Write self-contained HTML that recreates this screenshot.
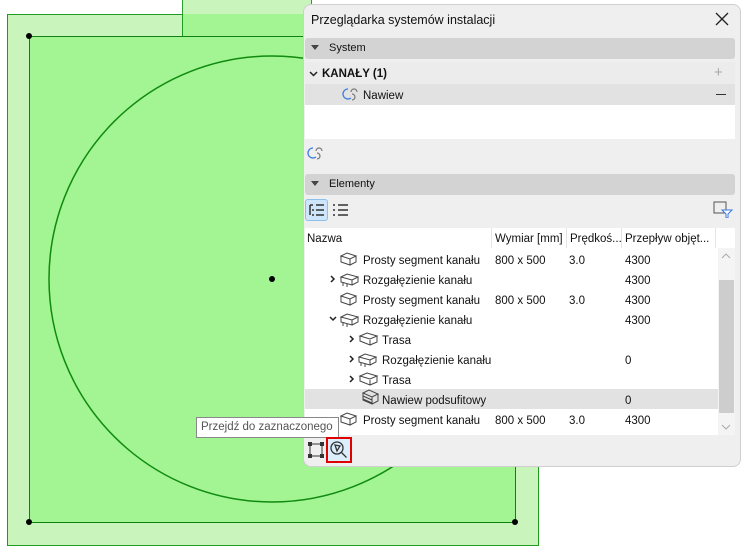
<!DOCTYPE html>
<html><head><meta charset="utf-8"><style>
*{margin:0;padding:0;box-sizing:border-box}
body{width:741px;height:549px;overflow:hidden;background:#fff;position:relative;font-family:"Liberation Sans",sans-serif;font-size:11.5px;color:#111}
.a{position:absolute}
.t{position:absolute;white-space:nowrap;line-height:20px}
.hdr{position:absolute;left:305px;width:430px;height:21px;background:#d3d3d3;border-radius:3px}
.row{position:absolute;left:305px;width:413px;height:20px}
.ic{position:absolute}
.tb .t{margin-top:2px}
</style></head><body>
<!-- canvas -->
<div class="a" style="left:182px;top:-2px;width:130px;height:38px;background:#c9f4bb;border:1px solid #2aa12a"></div>
<div class="a" style="left:7px;top:14px;width:532px;height:532px;background:#c9f4bb;border:1.5px solid #1e9a1e"></div>
<div class="a" style="left:182px;top:14px;width:130px;height:22px;background:#a2f592;border-left:1.5px solid #1e9a1e"></div>
<div class="a" style="left:29px;top:36px;width:487px;height:487px;background:#a2f592;border:1.5px solid #108010"></div>
<svg class="a" style="left:0;top:0" width="741" height="549">
<circle cx="272" cy="279" r="223" fill="none" stroke="#108a10" stroke-width="1.5"/>
<circle cx="29" cy="36" r="3" fill="#000"/><circle cx="29" cy="522" r="3" fill="#000"/><circle cx="515" cy="522" r="3" fill="#000"/><circle cx="272" cy="279" r="3" fill="#000"/>
</svg>
<!-- panel -->
<div class="a" style="left:303px;top:4px;width:438px;height:463px;background:#efefef;border:1px solid #cfcfcf;border-radius:8px"></div>
<div class="t" style="left:311px;top:10px;font-size:12.5px">Przeglądarka systemów instalacji</div>
<svg class="a" style="left:715px;top:12px" width="14" height="14"><path d="M1 1L13 13M13 1L1 13" stroke="#222" stroke-width="1.3"/></svg>
<div class="hdr" style="top:38px"></div>
<svg class="a" style="left:311px;top:45px" width="9" height="6"><path d="M0 0H8L4 5Z" fill="#444"/></svg>
<div class="t" style="left:329px;top:38px;font-size:11px">System</div>
<div class="a" style="left:305px;top:62px;width:430px;height:43px;background:#ececec"></div>
<svg class="a" style="left:309px;top:71px" width="9" height="6"><path d="M1 1L4.5 4.5L8 1" stroke="#222" stroke-width="1.5" fill="none"/></svg>
<div class="t" style="left:322px;top:64px;font-weight:bold;font-size:11.5px">KANAŁY (1)</div>
<div class="t" style="left:714px;top:63px;color:#aaa;font-size:15px">+</div>
<div class="a" style="left:305px;top:84px;width:430px;height:21px;background:#e2e2e2"></div>
<svg class="ic" style="left:342px;top:86px" width="18" height="16"><path d="M6 3a5 5 0 1 0 3 9" stroke="#3a7ae0" stroke-width="1.3" fill="none"/><path d="M9 6a3 3 0 0 1 6 0M10 8a3 3 0 1 1 0 6" stroke="#777" stroke-width="1.2" fill="none"/></svg>
<div class="t" style="left:363px;top:86px">Nawiew</div>
<div class="a" style="left:716px;top:94px;width:10px;height:1px;background:#333"></div>
<div class="a" style="left:305px;top:105px;width:430px;height:34px;background:#fff"></div>
<svg class="ic" style="left:307px;top:145px" width="18" height="17"><path d="M6 3a5 5 0 1 0 3 9" stroke="#3a7ae0" stroke-width="1.3" fill="none"/><path d="M9 6a3 3 0 0 1 6 0M10 8a3 3 0 1 1 0 6" stroke="#777" stroke-width="1.2" fill="none"/></svg>
<div class="hdr" style="top:174px"></div>
<svg class="a" style="left:311px;top:181px" width="9" height="6"><path d="M0 0H8L4 5Z" fill="#444"/></svg>
<div class="t" style="left:329px;top:174px;font-size:11px">Elementy</div>
<div class="a" style="left:305px;top:199px;width:23px;height:22px;background:#cde6fb;border:1px solid #8cc1ee;border-radius:3px"></div>
<svg class="a" style="left:309px;top:204px" width="40" height="13"><path d="M1 1h3M1 1v10M3 6h2M3 11h2M7 1h8M7 6h8M7 11h8" stroke="#333" stroke-width="1.5" fill="none"/><path d="M24 1h2M24 6h2M24 11h2M29 1h10M29 6h10M29 11h10" stroke="#333" stroke-width="1.6"/></svg>
<svg class="a" style="left:713px;top:201px" width="20" height="17"><rect x="1" y="1" width="12" height="11" stroke="#555" fill="none"/><path d="M9 9h10l-4 4v4h-2v-4z" fill="#fff" stroke="#3a7ae0"/></svg>
<!-- table -->
<div class="a" style="left:305px;top:228px;width:430px;height:207px;background:#fff"></div>
<div class="a" style="left:491px;top:228px;width:1px;height:20px;background:#e4e4e4"></div>
<div class="a" style="left:566px;top:228px;width:1px;height:20px;background:#e4e4e4"></div>
<div class="a" style="left:621px;top:228px;width:1px;height:20px;background:#e4e4e4"></div>
<div class="a" style="left:715px;top:228px;width:1px;height:20px;background:#e4e4e4"></div>
<div class="tb">
<div class="t" style="left:307px;top:227px">Nazwa</div>
<div class="t" style="left:495px;top:227px">Wymiar [mm]</div>
<div class="t" style="left:570px;top:227px">Prędkoś...</div>
<div class="t" style="left:625px;top:227px">Przepływ objęt...</div>
</div>
<div class="a" style="left:718px;top:248px;width:17px;height:187px;background:#f4f4f4"></div>
<div class="a" style="left:719px;top:280px;width:15px;height:133px;background:#cdcdcd"></div>
<svg class="a" style="left:721px;top:252px" width="10" height="180"><path d="M1 6L5 2L9 6" stroke="#aaa" fill="none"/><path d="M1 173L5 177L9 173" stroke="#aaa" fill="none"/></svg>
<div class="row" style="top:389px;background:#e2e2e2"></div>
<svg class="a" style="left:305px;top:250px" width="190" height="180" fill="none" stroke="#444" stroke-width="1">
<g id="p"><path d="M36 6l6-3 9 3-6 3z M36 6v6l9 3v-6 M45 15l6-3V6"/></g>
<use href="#p" y="40"/><use href="#p" y="160"/>
<g id="r"><path d="M36 27l6-3 11 3-6 3z M36 27v5l11 3v-5 M47 35l6-3v-5 M38 33v3 M42 34v3"/></g>
<use href="#r" y="40"/><use href="#r" x="18" y="80"/>
<path d="M26 26l3 3-3 3M25 67l3 3 3-3M45 86l3 3-3 3M45 106l3 3-3 3M45 126l3 3-3 3" stroke="#222" stroke-width="1.5"/>
<g id="tr"><path d="M55 86l7-3 10 3-7 3z M55 86v5l10 4v-5 M65 95l7-3v-6"/></g>
<use href="#tr" y="40"/>
<path d="M58 143l6-3 9 4-6 3z M58 143v7l9 4v-7 M67 154l6-3v-7 M58 146l9 4 M58 149l9 4"/>
</svg>
<div class="tb">
<div class="t" style="left:363px;top:249px">Prosty segment kanału</div>
<div class="t" style="left:363px;top:269px">Rozgałęzienie kanału</div>
<div class="t" style="left:363px;top:289px">Prosty segment kanału</div>
<div class="t" style="left:363px;top:309px">Rozgałęzienie kanału</div>
<div class="t" style="left:382px;top:329px">Trasa</div>
<div class="t" style="left:382px;top:349px">Rozgałęzienie kanału</div>
<div class="t" style="left:382px;top:369px">Trasa</div>
<div class="t" style="left:382px;top:389px">Nawiew podsufitowy</div>
<div class="t" style="left:363px;top:409px">Prosty segment kanału</div>
<div class="t" style="left:495px;top:249px">800 x 500</div><div class="t" style="left:569px;top:249px">3.0</div><div class="t" style="left:625px;top:249px">4300</div>
<div class="t" style="left:625px;top:269px">4300</div>
<div class="t" style="left:495px;top:289px">800 x 500</div><div class="t" style="left:569px;top:289px">3.0</div><div class="t" style="left:625px;top:289px">4300</div>
<div class="t" style="left:625px;top:309px">4300</div>
<div class="t" style="left:625px;top:349px">0</div>
<div class="t" style="left:625px;top:389px">0</div>
<div class="t" style="left:495px;top:409px">800 x 500</div><div class="t" style="left:569px;top:409px">3.0</div><div class="t" style="left:625px;top:409px">4300</div>
</div>
<!-- tooltip -->
<div class="a" style="left:196px;top:417px;width:143px;height:21px;background:#fff;border:1px solid #888"></div>
<div class="t" style="left:201px;top:417px;color:#555">Przejdź do zaznaczonego</div>
<!-- bottom icons -->
<svg class="a" style="left:307px;top:441px" width="18" height="18"><rect x="3" y="3" width="12" height="12" fill="none" stroke="#333"/><g fill="#333"><rect x="1" y="1" width="4" height="4"/><rect x="13" y="1" width="4" height="4"/><rect x="1" y="13" width="4" height="4"/><rect x="13" y="13" width="4" height="4"/></g></svg>
<div class="a" style="left:326px;top:437px;width:26px;height:26px;border:2.5px solid #e00000;background:#dbeefc"></div>
<svg class="a" style="left:329px;top:440px" width="20" height="20" fill="none" stroke="#333" stroke-width="1.3"><circle cx="8" cy="8" r="6"/><path d="M6 5l5 1-3 5zM12.5 12.5l5 5"/></svg>
</body></html>
